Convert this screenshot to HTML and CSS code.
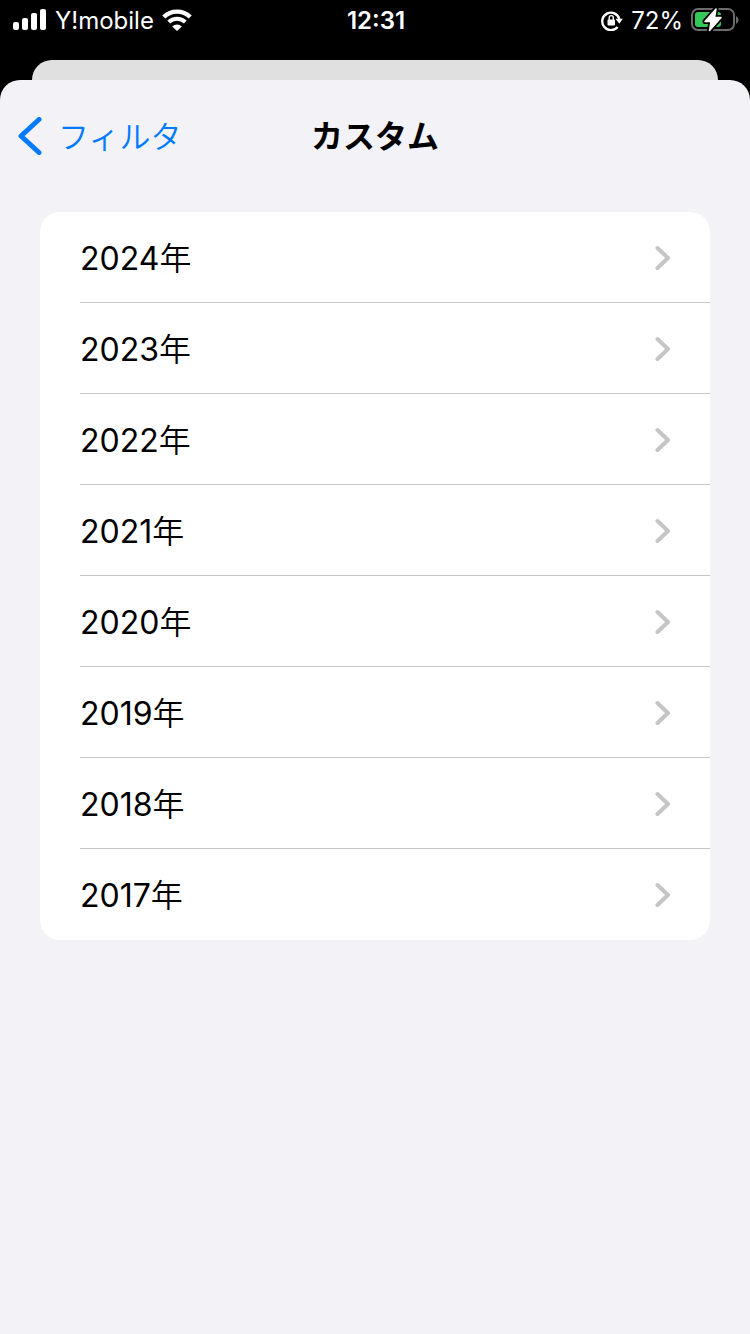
FILE: index.html
```html
<!DOCTYPE html>
<html lang="ja">

<head>
    <meta charset="utf-8">
    <meta name="viewport" content="width=device-width, initial-scale=1.0">
    <title>カスタム</title>
    <link rel="stylesheet" href="styles.css">
</head>

<body>
    <div class="status-bar">
        <div class="status-left">
            <svg width="34" height="22" viewBox="0 0 34 22" fill="#fff" aria-hidden="true">
                <rect x="0" y="13" width="6" height="8" rx="2" />
                <rect x="9" y="9" width="6" height="12" rx="2" />
                <rect x="18" y="4" width="6" height="17" rx="2" />
                <rect x="27" y="0" width="6" height="21" rx="2" />
            </svg>
            <span>Y!mobile</span>
            <svg width="30" height="22" viewBox="0 0 30 22" aria-hidden="true">
                <path d="M1.8 8a19 19 0 0 1 26.4 0" fill="none" stroke="#fff" stroke-width="4.4" />
                <path d="M6.7 13a12 12 0 0 1 16.6 0" fill="none" stroke="#fff" stroke-width="4" />
                <path d="M10.2 17.4a7 7 0 0 1 9.6 0L15 22z" fill="#fff" />
            </svg>
        </div>
        <div class="clock">12:31</div>
        <div class="status-right">
            <svg width="22" height="22" viewBox="0 0 22 22" aria-hidden="true">
                <path d="M16.6 18A8.700 8.700 0 1 1 18.300 10" fill="none" stroke="#fff" stroke-width="2.4" />
                <path d="M14.500 9.800h7.300l-3.500 5z" fill="#fff" />
                <rect x="6.500" y="10.500" width="7.500" height="6" rx="1" fill="#fff" />
                <path d="M8.2 11V8.700a2 2 0 0 1 4.100 0V11" fill="none" stroke="#fff" stroke-width="1.400" />
            </svg>
            <span>72%</span>
            <svg width="48" height="26" viewBox="0 0 48 26" aria-hidden="true">
                <rect x="1" y="2" width="42" height="21" rx="6" fill="none" stroke="#6b6b6d" stroke-width="2" />
                <path d="M45 9v8q2.6-1.3 2.6-4t-2.6-4z" fill="#6b6b6d" />
                <rect x="4" y="5" width="26" height="15" rx="3" fill="#34c759" />
                <path d="M25 2 14 14.500h6L18.500 23.500 30 10.500h-6.500z" fill="#000" stroke="#000" stroke-width="5" stroke-linejoin="round" />
                <path d="M25 2 14 14.500h6L18.500 23.500 30 10.500h-6.500z" fill="#fff" stroke="#fff" stroke-width="1.500" stroke-linejoin="round" />
            </svg>
        </div>
    </div>
    <div class="back-sheet"></div>
    <main class="sheet">
        <header class="nav">
            <button type="button" class="back">
                <svg width="24" height="38" viewBox="0 0 24 38" aria-hidden="true">
                    <path d="M21 2.5 3 19l18 16.5" fill="none" stroke="#007aff" stroke-width="5" stroke-linecap="round" stroke-linejoin="round" />
                </svg>
                <span class="label">フィルタ</span>
            </button>
            <h1 class="title">カスタム</h1>
        </header>
        <ul class="list">
            <li><a class="row" href="#2024"><span class="year">2024<span class="unit">年</span></span></a></li>
            <li><a class="row" href="#2023"><span class="year">2023<span class="unit">年</span></span></a></li>
            <li><a class="row" href="#2022"><span class="year">2022<span class="unit">年</span></span></a></li>
            <li><a class="row" href="#2021"><span class="year">2021<span class="unit">年</span></span></a></li>
            <li><a class="row" href="#2020"><span class="year">2020<span class="unit">年</span></span></a></li>
            <li><a class="row" href="#2019"><span class="year">2019<span class="unit">年</span></span></a></li>
            <li><a class="row" href="#2018"><span class="year">2018<span class="unit">年</span></span></a></li>
            <li><a class="row" href="#2017"><span class="year">2017<span class="unit">年</span></span></a></li>
        </ul>
    </main>
    <script>
        // 各行の右端に矢印を付ける
        document.querySelectorAll('.row').forEach(row => {
            row.insertAdjacentHTML('beforeend', `<svg width="16" height="26" viewBox="0 0 16 26" aria-hidden="true">
                <path d="M2.5 3 13 13 2.5 23" fill="none" stroke="#c5c5c7" stroke-width="4" stroke-linecap="round" stroke-linejoin="round" />
            </svg>`);
        });
    </script>
</body>

</html>
```

FILE: styles.css
```css
* {
    box-sizing: border-box;
}

body {
    display: flex;
    flex-direction: column;
    min-height: 100vh;
    margin: 0;
    background-color: #000;
    font-family: Inter, "Noto Sans CJK JP", sans-serif;
}

.status-bar {
    display: grid;
    grid-template-columns: 1fr auto 1fr;
    align-items: center;
    height: 40px;
    padding: 0 11px 0 13px;
    color: #fff;
    font-size: 24px;
}

.status-left, .status-right {
    display: flex;
    align-items: center;
    gap: 8px;
}

.status-right {
    justify-content: flex-end;
}

.clock {
    font-weight: 600;
}

/* 後ろに重なっているシート */
.back-sheet {
    height: 20px;
    margin: 20px 32px 0;
    border-radius: 20px 20px 0 0;
    background-color: #e0e0e0;
}

.sheet {
    flex: 1;
    border-radius: 20px 20px 0 0;
    background-color: #f2f2f7;
}

.nav {
    display: grid;
    grid-template-columns: 1fr auto 1fr;
    align-items: center;
    height: 112px;
    padding: 0 18px;
}

.back {
    display: flex;
    align-items: center;
    justify-self: start;
    gap: 16px;
    padding: 0;
    border: none;
    background: none;
    color: #007aff;
    font-family: inherit;
    font-size: 31px;
    cursor: pointer;
}

.label, .title {
    padding-bottom: 4px;
}

.label, .unit {
    font-weight: 350;
}

/* Inter は可変ウェイトなので漢字とカナだけ細くする */
.label, .unit {
    font-family: "Noto Sans CJK JP DemiLight", "Noto Sans CJK JP", sans-serif;
}

.title {
    margin: 0;
    font-size: 32px;
    font-weight: 700;
}

.list {
    margin: 20px 40px;
    padding: 0 0 0 40px;
    border-radius: 20px;
    background-color: #fff;
    list-style: none;
}

.row {
    display: flex;
    align-items: center;
    justify-content: space-between;
    height: 91px;
    padding: 1px 39px 0 0;
    border-bottom: 1px solid #c6c6c8;
    color: #000;
    font-size: 32px;
    text-decoration: none;
}

.year {
    padding-bottom: 4px;
}

.list li:last-child .row {
    border-bottom: none;
}
```
